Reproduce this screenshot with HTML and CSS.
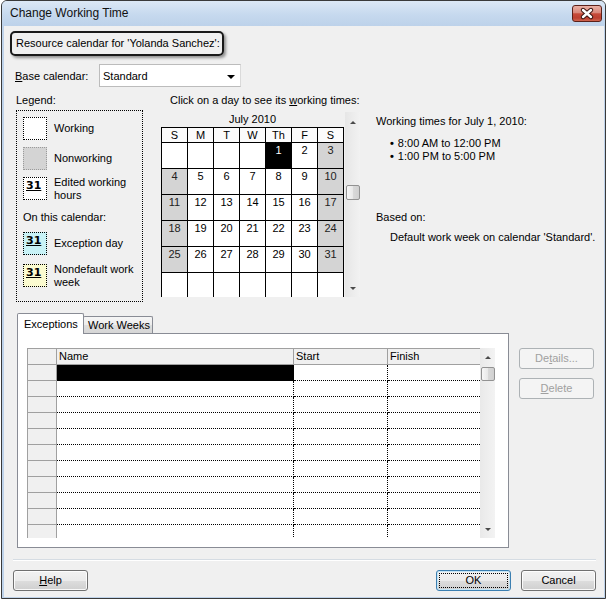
FILE: index.html
```html
<!DOCTYPE html>
<html>
<head>
<meta charset="utf-8">
<title>Change Working Time</title>
<link rel="stylesheet" href="styles.css">
</head>
<body>
<div class="window">
  <div class="titlebar">
    <span class="title">Change Working Time</span>
    <div class="close">
      <svg width="28" height="15" viewBox="0 0 28 15"><path d="M10 4L18 11M18 4L10 11" stroke="#3b1410" stroke-width="4.4" stroke-linecap="round"/><path d="M10 4L18 11M18 4L10 11" stroke="#fff" stroke-width="2.4" stroke-linecap="round"/></svg>
    </div>
  </div>
  <div class="client">
    <div class="resbox">Resource calendar for 'Yolanda Sanchez':</div>
    <div class="base-row">
      <span class="base-label"><u>B</u>ase calendar:</span>
      <div class="combo"><span>Standard</span><span class="combo-arrow"></span></div>
    </div>
    <div class="main">
      <div class="legend-col">
        <div class="legend-label">Legend:</div>
        <div class="legend-box">
          <div class="legend-item"><div class="swatch"></div><div class="legend-text">Working</div></div>
          <div class="legend-item gap7"><div class="swatch sw-nonworking"></div><div class="legend-text">Nonworking</div></div>
          <div class="legend-item gap7"><div class="swatch"><span class="num31">31</span></div><div class="legend-text">Edited working<br>hours</div></div>
          <div class="legend-sub">On this calendar:</div>
          <div class="legend-item gap8"><div class="swatch sw-exception"><span class="num31">31</span></div><div class="legend-text">Exception day</div></div>
          <div class="legend-item gap9"><div class="swatch sw-nondefault"><span class="num31">31</span></div><div class="legend-text">Nondefault work<br>week</div></div>
        </div>
      </div>
      <div class="cal-col">
        <div class="cal-hint">Click on a day to see its <u>w</u>orking times:</div>
        <div class="cal-wrap">
          <div class="cal-view">
            <div class="cal-month">July 2010</div>
            <div class="cal-grid">
              <div class="dh">S</div><div class="dh">M</div><div class="dh">T</div><div class="dh">W</div><div class="dh">Th</div><div class="dh">F</div><div class="dh">S</div>
              <div class="d"></div><div class="d"></div><div class="d"></div><div class="d"></div><div class="d sel">1</div><div class="d">2</div><div class="d we">3</div>
              <div class="d we">4</div><div class="d">5</div><div class="d">6</div><div class="d">7</div><div class="d">8</div><div class="d">9</div><div class="d we">10</div>
              <div class="d we">11</div><div class="d">12</div><div class="d">13</div><div class="d">14</div><div class="d">15</div><div class="d">16</div><div class="d we">17</div>
              <div class="d we">18</div><div class="d">19</div><div class="d">20</div><div class="d">21</div><div class="d">22</div><div class="d">23</div><div class="d we">24</div>
              <div class="d we">25</div><div class="d">26</div><div class="d">27</div><div class="d">28</div><div class="d">29</div><div class="d">30</div><div class="d we">31</div>
              <div class="d"></div><div class="d"></div><div class="d"></div><div class="d"></div><div class="d"></div><div class="d"></div><div class="d"></div>
            </div>
          </div>
          <div class="vscroll">
            <div class="sb-btn sb-up"><span class="tri-up"></span></div>
            <div class="sb-thumb cal-thumb"></div>
            <div class="sb-btn sb-down"><span class="tri-down"></span></div>
          </div>
        </div>
      </div>
      <div class="info-col">
        <div class="info-title">Working times for July 1, 2010:</div>
        <div class="times">
          <div><span class="bullet">&#8226;</span>8:00 AM to 12:00 PM</div>
          <div><span class="bullet">&#8226;</span>1:00 PM to 5:00 PM</div>
        </div>
        <div class="based">Based on:</div>
        <div class="based-val">Default work week on calendar 'Standard'.</div>
      </div>
    </div>
    <div class="tabs-area">
      <div class="tabs-left">
        <div class="tabstrip">
          <div class="tab active">Exceptions</div>
          <div class="tab inactive">Work Weeks</div>
        </div>
        <div class="tabpanel">
          <div class="grid">
            <div class="gtable">
              <div class="g-row g-head"><div class="hc c-rh"></div><div class="hc c-name">Name</div><div class="hc c-start">Start</div><div class="hc c-finish">Finish</div></div>
              <div class="g-row"><div class="g-rh"></div><div class="g-c c-name c-sel"></div><div class="g-c c-start"></div><div class="g-c c-finish"></div></div>
              <div class="g-row"><div class="g-rh"></div><div class="g-c c-name"></div><div class="g-c c-start"></div><div class="g-c c-finish"></div></div>
              <div class="g-row"><div class="g-rh"></div><div class="g-c c-name"></div><div class="g-c c-start"></div><div class="g-c c-finish"></div></div>
              <div class="g-row"><div class="g-rh"></div><div class="g-c c-name"></div><div class="g-c c-start"></div><div class="g-c c-finish"></div></div>
              <div class="g-row"><div class="g-rh"></div><div class="g-c c-name"></div><div class="g-c c-start"></div><div class="g-c c-finish"></div></div>
              <div class="g-row"><div class="g-rh"></div><div class="g-c c-name"></div><div class="g-c c-start"></div><div class="g-c c-finish"></div></div>
              <div class="g-row"><div class="g-rh"></div><div class="g-c c-name"></div><div class="g-c c-start"></div><div class="g-c c-finish"></div></div>
              <div class="g-row"><div class="g-rh"></div><div class="g-c c-name"></div><div class="g-c c-start"></div><div class="g-c c-finish"></div></div>
              <div class="g-row"><div class="g-rh"></div><div class="g-c c-name"></div><div class="g-c c-start"></div><div class="g-c c-finish"></div></div>
              <div class="g-row"><div class="g-rh"></div><div class="g-c c-name"></div><div class="g-c c-start"></div><div class="g-c c-finish"></div></div>
              <div class="g-row"><div class="g-rh"></div><div class="g-c c-name"></div><div class="g-c c-start"></div><div class="g-c c-finish"></div></div>
            </div>
            <div class="gscroll">
              <div class="sb-btn gs-up"><span class="tri-up"></span></div>
              <div class="sb-thumb gs-thumb"></div>
              <div class="sb-btn sb-down"><span class="tri-down"></span></div>
            </div>
          </div>
        </div>
      </div>
      <div class="side">
        <div class="btn disabled">De<u>t</u>ails...</div>
        <div class="btn disabled"><u>D</u>elete</div>
      </div>
    </div>
    <div class="sep"></div>
    <div class="footer">
      <div class="btn"><u>H</u>elp</div>
      <div class="spacer"></div>
      <div class="btn btn-ok">OK</div>
      <div class="btn">Cancel</div>
    </div>
  </div>
</div>
</body>
</html>
```

FILE: styles.css
```css
* { box-sizing: border-box; }
html, body { margin: 0; padding: 0; }
body {
  width: 607px; height: 599px; overflow: hidden; background: #fff;
  font-family: "Liberation Sans", Arial, sans-serif; font-size: 11px; color: #000;
}
.window {
  margin-left: 1px; width: 605px; height: 599px;
  border: 1px solid #3a3a3a; border-radius: 6px 6px 0 0;
  background: #bfd3ea; display: flex; flex-direction: column; overflow: hidden;
}
.titlebar {
  height: 25px; flex: none; display: flex; align-items: flex-start; justify-content: space-between;
  background: linear-gradient(#dce8f5, #c6d9ee 55%, #bdd2ea);
}
.title { font-size: 12px; line-height: 24px; padding-left: 8px; color: #111; }
.close {
  margin: 4px 3px 0 0; width: 30px; height: 17px;
  border: 1px solid #5b2019; border-radius: 3px;
  background: linear-gradient(#eab0a4 0%, #d9877a 45%, #c74a39 52%, #bd4031 80%, #d0654f 100%);
  display: flex;
}
.close svg { display: block; }
.client { flex: 1; margin: 0 1px 1px 2px; background: #f0f0f0; }

.resbox {
  margin: 5px 0 0 6px; width: 214px; height: 25px;
  border: 2px solid #1a1a1a; border-radius: 5px;
  box-shadow: 2px 2px 3px rgba(0,0,0,.4);
  padding-left: 4px; line-height: 21px; white-space: nowrap;
}
.base-row { display: flex; align-items: center; margin: 8px 0 0 11px; height: 23px; }
.base-label { width: 84px; }
.combo {
  width: 142px; height: 23px; border: 1px solid #bcbcbc; border-right-color: #dadada;
  background: #fff; display: flex; align-items: center; justify-content: space-between;
  padding: 0 5px 0 3px;
}
.combo-arrow {
  width: 0; height: 0; margin-top: 2px;
  border-left: 4px solid transparent; border-right: 4px solid transparent; border-top: 4px solid #000;
}

.main { display: flex; margin-top: 6px; height: 210px; }
.legend-col { margin-left: 12px; width: 127px; flex: none; }
.legend-label { line-height: 14px; margin-bottom: 3px; }
.legend-box { height: 192px; border: 1px dotted #000; padding: 6px 0 0 6px; }
.legend-item { display: flex; align-items: center; height: 23px; }
.gap7 { margin-top: 7px; }
.gap8 { margin-top: 8px; }
.gap9 { margin-top: 9px; }
.swatch { width: 24px; height: 23px; border: 1px dotted #000; flex: none; background: #fff; padding-left: 2px; }
.sw-nonworking { background: #d4d4d4; border-color: #9a9a9a; }
.sw-exception { background: #c8f2f6; }
.sw-nondefault { background: #fbfbd0; }
.num31 {
  display: block; font-family: "DejaVu Sans", sans-serif; font-weight: bold;
  font-size: 11px; line-height: 15px; text-decoration: underline;
}
.legend-text { margin-left: 7px; line-height: 13px; }
.legend-sub { margin-top: 10px; line-height: 14px; }

.cal-col { margin-left: 18px; width: 199px; flex: none; }
.cal-hint { padding-left: 9px; line-height: 14px; margin-bottom: 5px; white-space: nowrap; }
.cal-wrap { display: flex; height: 185px; }
.cal-view { width: 183px; height: 185px; overflow: hidden; }
.cal-month { line-height: 15px; text-align: center; }
.cal-grid {
  display: grid; grid-template-columns: repeat(7, 25px); grid-template-rows: 14px repeat(6, 25px);
  gap: 1px; background: #000; border: 1px solid #000; width: 183px;
}
.dh { background: #fbfbfb; text-align: center; line-height: 14px; }
.d { background: #fff; text-align: center; line-height: 13px; padding-top: 1px; }
.d.we { background: #d4d4d4; color: #222; }
.d.sel { background: #000; color: #fff; }

.vscroll {
  margin-left: 1px; width: 15px; height: 185px; display: flex; flex-direction: column;
  background: linear-gradient(to right, #e6e6e6, #f2f2f2);
}
.sb-btn { display: flex; align-items: center; justify-content: center; flex: none; }
.sb-up { height: 20px; }
.sb-down { margin-top: auto; height: 17px; }
.tri-up { width: 0; height: 0; border-left: 3px solid transparent; border-right: 3px solid transparent; border-bottom: 3px solid #4a4a4a; }
.tri-down { width: 0; height: 0; border-left: 3px solid transparent; border-right: 3px solid transparent; border-top: 3px solid #4a4a4a; }
.sb-thumb {
  width: 14px; margin-left: 1px; border: 1px solid #929292; border-radius: 2px;
  background: linear-gradient(to right, #f7f7f7, #e8e8e8 50%, #d9d9d9 51%, #d0d0d0);
  flex: none;
}
.cal-thumb { margin-top: 53px; height: 15px; }

.info-col { margin-left: 16px; padding-top: 21px; white-space: nowrap; }
.info-title { line-height: 14px; }
.times { margin-top: 9px; padding-left: 14px; line-height: 13px; }
.bullet { font-weight: bold; margin-right: 4px; }
.based { margin-top: 47px; line-height: 14px; }
.based-val { margin-top: 6px; padding-left: 14px; line-height: 14px; }

.tabs-area { display: flex; margin-top: 10px; }
.tabs-left { margin-left: 13px; width: 492px; flex: none; }
.tabstrip { display: flex; align-items: flex-end; height: 20px; }
.tab { border: 1px solid #898c95; border-bottom: none; border-radius: 2px 2px 0 0; line-height: 15px; white-space: nowrap; }
.tab.active { height: 21px; width: 67px; margin-bottom: -1px; background: #fff; padding: 3px 0 0 6px; position: relative; z-index: 1; }
.tab.inactive {
  height: 17px; width: 70px; margin-left: -1px; padding: 1px 0 0 4px;
  background: linear-gradient(#f6f6f6, #ececec 50%, #dedede 51%, #d6d6d6);
}
.tabpanel { height: 215px; border: 1px solid #898c95; background: #fff; padding: 14px 0 0 9px; }
.grid { display: flex; width: 468px; height: 190px; overflow: hidden; }
.gtable { width: 453px; flex: none; }
.g-row { display: flex; height: 16px; }
.g-head { height: 17px; background: #f0f0f0; border-top: 1px solid #a0a0a0; border-bottom: 1px solid #a0a0a0; }
.hc { border-right: 1px solid #a0a0a0; line-height: 15px; padding-left: 2px; }
.g-head .c-rh { border-left: 1px solid #a0a0a0; }
.c-rh { width: 30px; }
.g-rh { width: 30px; background: #f0f0f0; border-left: 1px solid #a0a0a0; border-right: 1px solid #a0a0a0; border-bottom: 1px solid #a0a0a0; }
.g-c { border-bottom: 1px dotted #000; }
.c-name { width: 237px; }
.c-start { width: 94px; }
.c-finish { width: 92px; }
.g-c.c-name, .g-c.c-start { border-right: 1px dotted #000; }
.g-head .c-finish { border-right: none; }
.c-sel { background: #000; }
.gscroll { width: 15px; height: 190px; display: flex; flex-direction: column; background: linear-gradient(to right, #e9e9e9, #f3f3f3); flex: none; }
.gs-up { height: 18px; }
.gs-thumb { margin-top: 1px; height: 14px; }

.side { margin-left: 10px; padding-top: 35px; display: flex; flex-direction: column; gap: 9px; }
.btn {
  width: 75px; height: 21px; border: 1px solid #707070; border-radius: 3px;
  background: linear-gradient(#f2f2f2, #ebebeb 50%, #dddddd 51%, #cfcfcf);
  box-shadow: inset 0 0 0 1px rgba(255,255,255,.85);
  display: flex; align-items: center; justify-content: center; line-height: 13px; flex: none;
}
.btn.disabled { border-color: #adb2b5; background: #f4f4f4; color: #a0a0a0; box-shadow: none; }
.sep { margin: 11px 8px 0 9px; border-top: 1px solid #d5dce3; border-bottom: 1px solid #fff; }
.footer { display: flex; margin: 9px 8px 0 9px; }
.spacer { flex: 1; }
.btn-ok {
  margin-right: 10px; border-color: #3c7fb1;
  box-shadow: inset 0 0 0 1px #c4e5f6;
  outline: 1px dotted #000; outline-offset: -4px;
}
```
